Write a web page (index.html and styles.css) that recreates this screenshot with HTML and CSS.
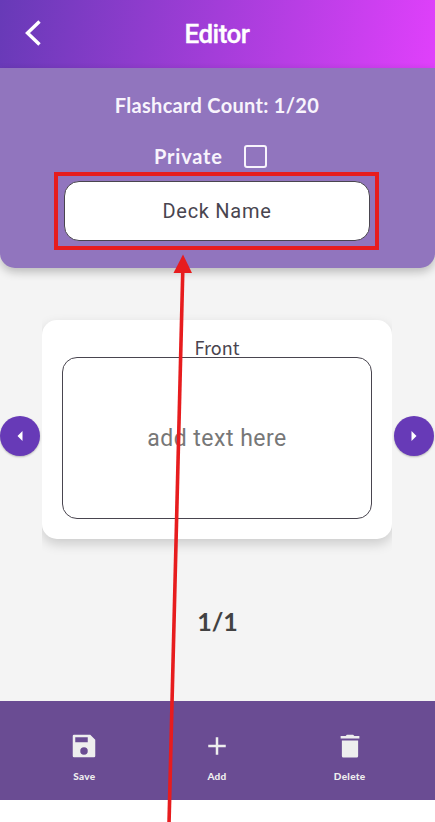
FILE: index.html
```html
<!DOCTYPE html>
<html lang="en">
<head>
<meta charset="utf-8">
<title>Editor</title>
<link rel="stylesheet" href="styles.css">
</head>
<body>
<div class="app">
  <header class="topbar">
    <svg class="back" viewBox="0 0 18 26"><path d="M15.500 1.500 3.500 13l12 11.500"/></svg>
    <h1>Editor</h1>
  </header>
  <section class="deck">
    <p class="count">Flashcard Count: 1/20</p>
    <div class="private"><span>Private</span><span class="check"></span></div>
    <div class="highlight"><div class="deck-name">Deck Name</div></div>
  </section>
  <main class="stage">
    <div class="carousel">
      <button class="nav"><svg viewBox="0 0 6 10"><path d="M5.500 0v10L.5 5z"/></svg></button>
      <div class="clip">
        <article class="card">
          <div class="side">Front</div>
          <div class="field">add text here</div>
        </article>
      </div>
      <button class="nav"><svg viewBox="0 0 6 10"><path d="M.5 0v10l5-5z"/></svg></button>
    </div>
    <p class="page">1/1</p>
  </main>
  <nav class="bottom">
    <div class="item"><svg viewBox="0 0 24 24"><path d="M17 3H4a1 1 0 0 0-1 1v16a1 1 0 0 0 1 1h16a1 1 0 0 0 1-1V7zm-5 16a3 3 0 1 1 0-6 3 3 0 0 1 0 6zm3-10H5V5h10z"/></svg><span>Save</span></div>
    <div class="item"><svg viewBox="0 0 24 24"><path d="M19 13h-6v6h-2v-6H5v-2h6V5h2v6h6z"/></svg><span>Add</span></div>
    <div class="item"><svg viewBox="0 0 24 24"><path d="M5.500 20a1.200 1.200 0 0 0 1.200 1.200h10.600a1.200 1.200 0 0 0 1.200-1.200V7.500h-13zM19.500 4H15.500l-1-1h-5l-1 1H4.500v2h15z"/></svg><span>Delete</span></div>
  </nav>
</div>
<svg class="pointer" viewBox="0 0 435 822"><path class="shaft" d="M182.800 270 169 824"/><path class="head" d="M183 254.500 192 273h-18.500z"/></svg>
</body>
</html>
```
FILE: styles.css
```css
* { box-sizing: border-box; }
body { margin: 0; background: #fff; font-family: Lato, sans-serif; position: relative; height: 822px; overflow: hidden; }
h1, p { margin: 0; }
.app { display: flex; flex-direction: column; height: 800px; background: #f4f4f4; }
.topbar { height: 68px; flex: none; display: grid; grid-template-columns: 60px 1fr 60px; align-items: center; background: linear-gradient(98.9deg, #673ab7, #e040fb); }
.back { width: 18px; height: 26px; margin-left: 24px; margin-top: -2px; fill: none; stroke: #fff; stroke-width: 3.4; }
h1 { font: 500 26px/30px Roboto, sans-serif; letter-spacing: -0.5px; color: #fff; text-align: center; -webkit-text-stroke: 0.3px #fff; padding-right: 1px; }
.deck { height: 200px; flex: none; display: flex; flex-direction: column; align-items: center; background: #9175be; border-radius: 0 0 15px 15px; color: #f8f4fc; font-weight: 700; font-size: 20px; line-height: 24px; padding: 25px 1px 0 0; box-shadow: 0 4px 10px rgba(0,0,0,.24); }
.count { letter-spacing: .3px; }
.private { display: flex; align-items: center; justify-content: space-between; margin: 27px 13px 0 0; width: 113px; white-space: nowrap; letter-spacing: .8px; }
.check { width: 23px; height: 23px; flex: none; border: 2px solid #f8f4fc; border-radius: 3px; }
.highlight { width: 325px; height: 78px; margin: 4px 1px 0 0; border: 4px solid #e71c1e; padding: 5px 5px 5px 6px; }
.deck-name { height: 60px; border: 1px solid #49454f; border-radius: 15px; background: #fff; color: #49454f; font: 400 20px/58px Roboto, sans-serif; letter-spacing: .7px; text-align: center; }
.stage { flex: 1; }
.carousel { display: flex; align-items: center; margin-top: 32px; height: 271px; width: 434px; justify-content: space-between; }
.nav { width: 40px; height: 40px; margin: 0; border: 0; padding: 0; border-radius: 50%; background: #673ab7; display: flex; align-items: center; justify-content: center; box-shadow: 0 1px 2px rgba(0,0,0,.25); }
.nav svg { width: 6px; height: 10px; fill: #fff; }
.clip { width: 350px; height: 271px; padding-top: 20px; overflow: hidden; }
.card { height: 219px; padding: 18px 20px 20px; border-radius: 15px; background: #fff; box-shadow: 0 5px 12px rgba(0,0,0,.17); }
.side { height: 19px; text-align: center; font: 400 18px/19px "Noto Sans CJK SC", "Noto Sans", sans-serif; color: #49454f; }
.field { height: 162px; border: 1px solid #49454f; border-radius: 15px; text-align: center; font: 400 23px/162px Roboto, sans-serif; letter-spacing: .5px; color: #777; }
.page { font-size: 25px; line-height: 30px; font-weight: 700; text-align: center; color: #424242; margin-top: 35px; }
.bottom { height: 99px; flex: none; background: #6a4c93; display: flex; padding: 30px 19px 0 18px; }
.item { flex: 1; display: flex; flex-direction: column; align-items: center; color: #eee; font-size: 10px; line-height: 12px; font-weight: 900; letter-spacing: .3px; gap: 9px; }
.item svg { width: 30px; height: 30px; fill: #eee; }
.pointer { position: absolute; inset: 0; width: 435px; height: 822px; }
.shaft { stroke: #e71c1e; stroke-width: 3.6; }
.head { fill: #e71c1e; }
```
